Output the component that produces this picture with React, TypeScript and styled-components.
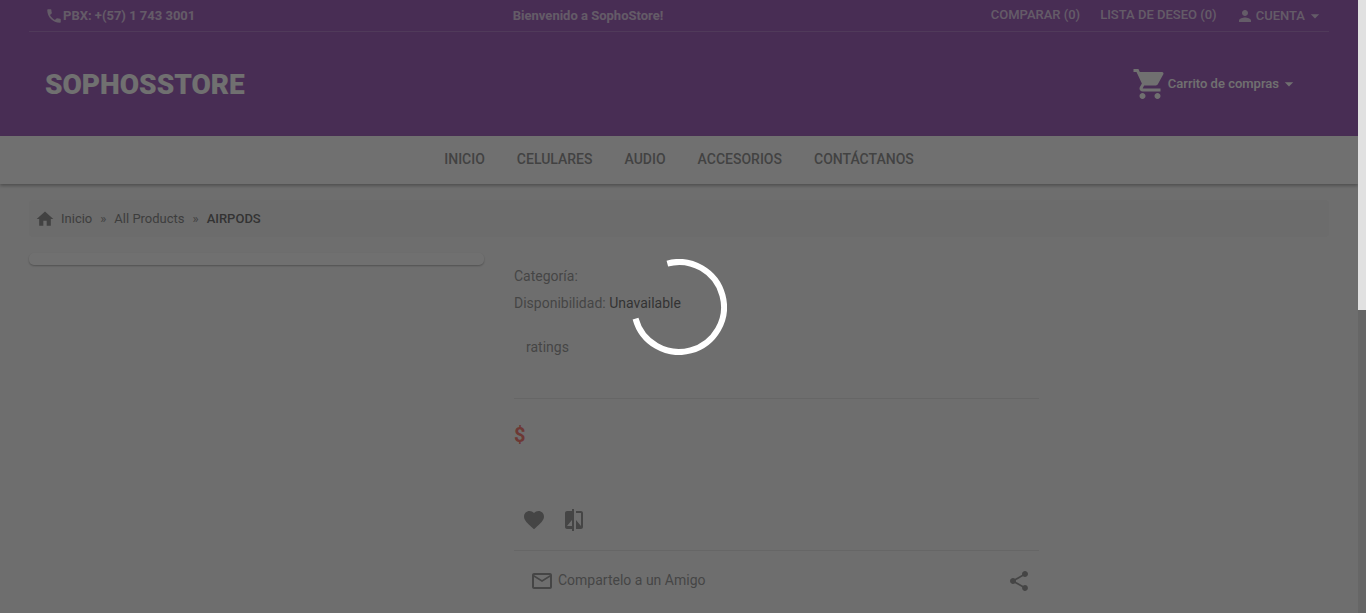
import React from "react";
import styled, { createGlobalStyle } from "styled-components";
import {
  MdArrowDropDown,
  MdCompare,
  MdFavorite,
  MdHome,
  MdMailOutline,
  MdPerson,
  MdPhone,
  MdShare,
  MdShoppingCart,
} from "react-icons/md";

const GlobalStyle = createGlobalStyle`
  *, *::before, *::after { box-sizing: border-box; }
  body {
    margin: 0;
    background: #f9f9f9;
    color: #444;
    font-family: Roboto, "Liberation Sans", sans-serif;
    font-size: 14px;
    line-height: 20px;
  }
  a { color: inherit; text-decoration: none; }
  button {
    padding: 0;
    border: 0;
    background: none;
    color: inherit;
    font: inherit;
    cursor: pointer;
  }
  svg { display: block; flex: none; }
`;

const Shell = styled.div`
  display: grid;
  grid-template-columns: minmax(0, 1fr) 8px;
  min-height: 100vh;
`;

const Page = styled.div`
  position: relative;
  overflow: hidden;
  background: #f9f9f9;
`;

const Container = styled.div`
  max-width: 1300px;
  margin: 0 auto;
`;

const Header = styled.header`
  background: #7b1fa2;
  color: #fff;
`;

const TopBar = styled(Container)`
  display: flex;
  align-items: center;
  justify-content: space-between;
  height: 32px;
  padding-left: 16px;
  border-bottom: 1px solid rgba(255, 255, 255, 0.2);
  font-size: 13px;
  font-weight: 500;
`;

const TopText = styled.span`
  display: flex;
  align-items: center;
  color: rgba(255, 255, 255, 0.7);
  font-weight: 700;
`;

const TopLinks = styled.nav`
  display: flex;
  align-items: center;
  color: rgba(255, 255, 255, 0.7);
`;

const TopLink = styled.a`
  padding: 0 10px 2px;
`;

const AccountButton = styled.button`
  display: flex;
  align-items: center;
  gap: 2px;
  padding: 0 4px 0 9px;
`;

const ButtonLabel = styled.span`
  display: flex;
  align-items: center;
`;

const BrandRow = styled(Container)`
  display: flex;
  align-items: center;
  justify-content: space-between;
  height: 104px;
  padding: 0 30px 0 16px;
`;

const Brand = styled.a`
  padding-top: 2px;
  font-size: 28px;
  line-height: 32px;
  font-weight: 900;
`;

const CartButton = styled.button`
  display: flex;
  align-items: center;
  font-size: 13px;
  font-weight: 500;
`;

const MainNav = styled.nav`
  position: relative;
  display: flex;
  align-items: center;
  justify-content: center;
  gap: 32px;
  height: 48px;
  padding-bottom: 2px;
  background: #fff;
  box-shadow: 0 2px 3px rgba(0, 0, 0, 0.4);
  color: #666;
  font-weight: 500;
`;

const Content = styled.main`
  padding-top: 16px;
`;

const Breadcrumb = styled.nav`
  display: flex;
  align-items: center;
  gap: 8px;
  height: 37px;
  padding: 0 6px;
  border-radius: 4px;
  background: #f0f0f0;
  color: #666;
  font-size: 13px;
`;

const HomeLink = styled.a`
  display: flex;
  align-items: center;
  gap: 6px;
`;

const Crumb = styled.span<{ $current?: boolean }>`
  color: ${(p) => (p.$current ? "#333" : "#555")};
  font-weight: ${(p) => (p.$current ? 500 : 400)};
`;

const Columns = styled.div`
  display: grid;
  grid-template-columns: 35% minmax(0, 1fr) 20%;
  column-gap: 30px;
  padding-top: 16px;
`;

const ImageCard = styled.section`
  align-self: start;
  height: 12px;
  border-radius: 5px;
  background: #fff;
  box-shadow: 0 1px 2px rgba(0, 0, 0, 0.4);
`;

const Info = styled.section`
  display: flex;
  flex-direction: column;
  padding-top: 10px;
`;

const Detail = styled.p`
  height: 27px;
  margin: 0;
  padding-top: 3px;
  color: #707070;
`;

const Availability = styled.span`
  color: #333;
`;

const Ratings = styled.p`
  margin: 0;
  padding: 20px 12px 41px;
  color: #707070;
`;

const Divider = styled.hr`
  width: 100%;
  margin: 0;
  border: 0;
  border-top: 1px solid #ddd;
`;

const Price = styled.h2`
  height: 109px;
  margin: 0;
  padding-top: 24px;
  color: #f44336;
  font-size: 20px;
  line-height: 24px;
  font-weight: 700;
`;

const Actions = styled.div`
  display: flex;
  gap: 16px;
  height: 42px;
  padding-left: 8px;
  color: #707070;
`;

const IconButton = styled.button`
  display: flex;
  height: 24px;
`;

const ShareRow = styled.div`
  display: flex;
  align-items: center;
  justify-content: space-between;
  height: 60px;
  padding: 0 8px 0 16px;
  color: #707070;
`;

const MailLink = styled.a`
  display: flex;
  align-items: center;
  gap: 4px;
`;

const MailText = styled.span`
  padding-bottom: 2px;
`;

const Overlay = styled.div`
  position: absolute;
  inset: 0;
  display: flex;
  align-items: center;
  justify-content: center;
  background: rgba(51, 51, 51, 0.7);
`;

const ScrollTrack = styled.div`
  background: #666;
`;

const ScrollThumb = styled.div`
  height: 310px;
  background: #e1e1e1;
`;

const menu = ["INICIO", "CELULARES", "AUDIO", "ACCESORIOS", "CONTÁCTANOS"];

export default function App() {
  return (
    <>
      <GlobalStyle />
      <Shell>
        <Page>
          <Header>
            <TopBar>
              <TopText>
                <MdPhone size={18} />
                PBX: +(57) 1 743 3001
              </TopText>
              <TopText>Bienvenido a SophoStore!</TopText>
              <TopLinks aria-label="Cuenta">
                <TopLink href="#comparar">COMPARAR (0)</TopLink>
                <TopLink href="#deseos">LISTA DE DESEO (0)</TopLink>
                <AccountButton type="button">
                  <MdPerson size={18} />
                  <ButtonLabel>
                    CUENTA
                    <MdArrowDropDown size={20} />
                  </ButtonLabel>
                </AccountButton>
              </TopLinks>
            </TopBar>
            <BrandRow>
              <Brand href="#inicio">SOPHOSSTORE</Brand>
              <CartButton type="button">
                <MdShoppingCart size={36} />
                <ButtonLabel>
                  Carrito de compras
                  <MdArrowDropDown size={20} />
                </ButtonLabel>
              </CartButton>
            </BrandRow>
          </Header>
          <MainNav aria-label="Principal">
            {menu.map((item) => (
              <a key={item} href={`#${item.toLowerCase()}`}>
                {item}
              </a>
            ))}
          </MainNav>
          <Content>
            <Container>
              <Breadcrumb aria-label="Ruta">
                <HomeLink href="#inicio">
                  <MdHome size={20} />
                  <Crumb>Inicio</Crumb>
                </HomeLink>
                <span>»</span>
                <a href="#productos">
                  <Crumb>All Products</Crumb>
                </a>
                <span>»</span>
                <Crumb $current aria-current="page">
                  AIRPODS
                </Crumb>
              </Breadcrumb>
              <Columns>
                <ImageCard />
                <Info>
                  <Detail>Categoría:</Detail>
                  <Detail>
                    Disponibilidad: <Availability>Unavailable</Availability>
                  </Detail>
                  <Ratings>ratings</Ratings>
                  <Divider />
                  <Price>$</Price>
                  <Actions>
                    <IconButton type="button" aria-label="Favorito">
                      <MdFavorite size={24} />
                    </IconButton>
                    <IconButton type="button" aria-label="Comparar">
                      <MdCompare size={24} />
                    </IconButton>
                  </Actions>
                  <Divider />
                  <ShareRow>
                    <MailLink href="#amigo">
                      <MdMailOutline size={24} />
                      <MailText>Compartelo a un Amigo</MailText>
                    </MailLink>
                    <IconButton type="button" aria-label="Compartir">
                      <MdShare size={24} />
                    </IconButton>
                  </ShareRow>
                </Info>
              </Columns>
            </Container>
          </Content>
          <Overlay role="status" aria-label="Cargando">
            <svg width="96" height="96" viewBox="0 0 96 96" fill="none">
              <path
                d="M36.35 4.53A45 45 0 1 1 4.53 59.65"
                stroke="#fff"
                strokeWidth="6"
              />
            </svg>
          </Overlay>
        </Page>
        <ScrollTrack>
          <ScrollThumb />
        </ScrollTrack>
      </Shell>
    </>
  );
}
